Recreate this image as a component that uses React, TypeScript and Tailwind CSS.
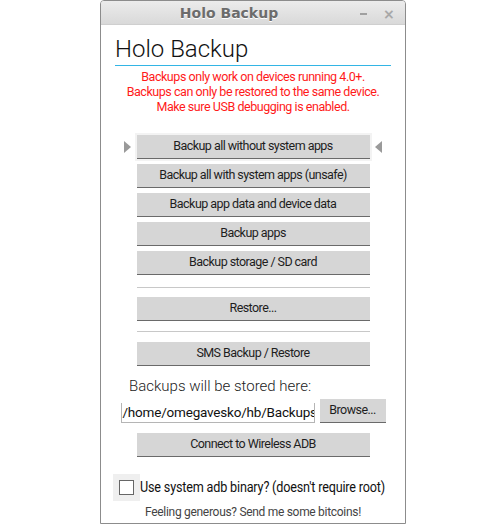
import React from "react";

const btnFont = { fontFamily: "Roboto, 'Liberation Sans', sans-serif" };

function Btn({ label, w = "w-[233px]" }: { label: string; w?: string }) {
  return (
    <div
      className={`${w} h-[24px] shrink-0 bg-[#d6d6d6] border-b border-[#6a6a6a] flex items-center justify-center text-[12.5px] tracking-[-0.55px] text-[#1e1e1e] leading-none whitespace-nowrap`}
      style={btnFont}
    >
      {label}
    </div>
  );
}

function Row({ label, selected = false }: { label: string; selected?: boolean }) {
  return (
    <div className="relative flex justify-center shrink-0">
      <div className={`px-[2px] py-[2px] ${selected ? "bg-[#f3f3f3]" : ""}`}>
        <Btn label={label} />
      </div>
      {selected && (
        <>
          <div className="absolute left-[23px] top-[8px] w-0 h-0 border-y-[6px] border-y-transparent border-l-[7px] border-l-[#9a9a9a]" />
          <div className="absolute right-[23px] top-[8px] w-0 h-0 border-y-[6px] border-y-transparent border-r-[7px] border-r-[#9a9a9a]" />
        </>
      )}
    </div>
  );
}

export default function App() {
  return (
    <div className="w-[500px] h-[527px] bg-white relative" style={btnFont}>
      <div className="ml-[100px] w-[306px] h-[524px] border border-[#8c8c8c] rounded-t-[4px] flex flex-col bg-white overflow-hidden">
        {/* title bar */}
        <div className="h-[24px] shrink-0 bg-gradient-to-b from-[#ececec] to-[#d9d9d9] border-b border-[#cfcfcf] relative flex items-center justify-center">
          <span
            className="text-[14px] font-bold text-[#6c6c6c] ml-[-48px] mt-[1px]"
            style={{ fontFamily: "'DejaVu Sans', sans-serif", textShadow: "0 1px 0 #ffffff" }}
          >
            Holo Backup
          </span>
          <div className="absolute left-[259px] top-[12px] w-[7px] h-[2px] bg-[#a0a0a0]" />
          <span className="absolute left-[282px] top-[3px] text-[14px] text-[#a8a8a8] font-bold" style={{ fontFamily: "'DejaVu Sans', sans-serif" }}>
            ×
          </span>
        </div>

        {/* heading */}
        <div className="mt-[10px] ml-[14px] shrink-0 text-[24px] leading-[28px] font-light text-[#111]">Holo Backup</div>
        <div className="mt-[2px] ml-[14px] shrink-0 w-[276px] h-[1px] bg-[#33b5e5]" />

        {/* warnings */}
        <div className="mt-[3px] shrink-0 text-center text-[12.5px] leading-[15px] tracking-[-0.45px] text-[#ff1a1a]">
          <div>Backups only work on devices running 4.0+.</div>
          <div>Backups can only be restored to the same device.</div>
          <div>Make sure USB debugging is enabled.</div>
        </div>

        {/* buttons */}
        <div className="mt-[19px] shrink-0 flex flex-col gap-[1px]">
          <Row label="Backup all without system apps" selected />
          <Row label="Backup all with system apps (unsafe)" />
          <Row label="Backup app data and device data" />
          <Row label="Backup apps" />
          <Row label="Backup storage / SD card" />
        </div>

        <div className="mt-[10px] shrink-0 mx-auto w-[233px] h-[1px] bg-[#c8c8c8]" />
        <div className="mt-[9px] shrink-0 flex justify-center">
          <Btn label="Restore..." />
        </div>
        <div className="mt-[10px] shrink-0 mx-auto w-[233px] h-[1px] bg-[#c8c8c8]" />
        <div className="mt-[10px] shrink-0 flex justify-center">
          <Btn label="SMS Backup / Restore" />
        </div>

        <div className="mt-[11px] shrink-0 ml-[28px] text-[15px] leading-[18px] font-light text-[#222]">
          Backups will be stored here:
        </div>

        <div className="mt-[4px] shrink-0 flex justify-center items-end gap-[5px]">
          <div className="w-[194px] h-[20px] border-b border-x border-[#b5b5b5] overflow-hidden whitespace-nowrap text-[13.5px] leading-[18px] tracking-[-0.2px] text-[#111] px-[1px]">
            /home/omegavesko/hb/Backups
          </div>
          <Btn label="Browse..." w="w-[66px]" />
        </div>

        <div className="mt-[10px] shrink-0 flex justify-center">
          <Btn label="Connect to Wireless ADB" />
        </div>

        <div className="mt-[17px] shrink-0 ml-[12px] flex items-center">
          <div className="w-[27px] h-[27px] shrink-0 bg-[#efefef] flex items-center justify-center">
            <div className="w-[15px] h-[15px] border border-[#666] bg-white" />
          </div>
          <span className="inline-block whitespace-nowrap origin-left scale-x-[0.87] text-[14.5px] tracking-[-0.2px] text-[#111]">
            Use system adb binary? (doesn't require root)
          </span>
        </div>

        <div className="mt-[3px] shrink-0 text-center text-[12px] leading-[16px] tracking-[-0.3px] text-[#444]">
          Feeling generous? Send me some bitcoins!
        </div>
      </div>
    </div>
  );
}
